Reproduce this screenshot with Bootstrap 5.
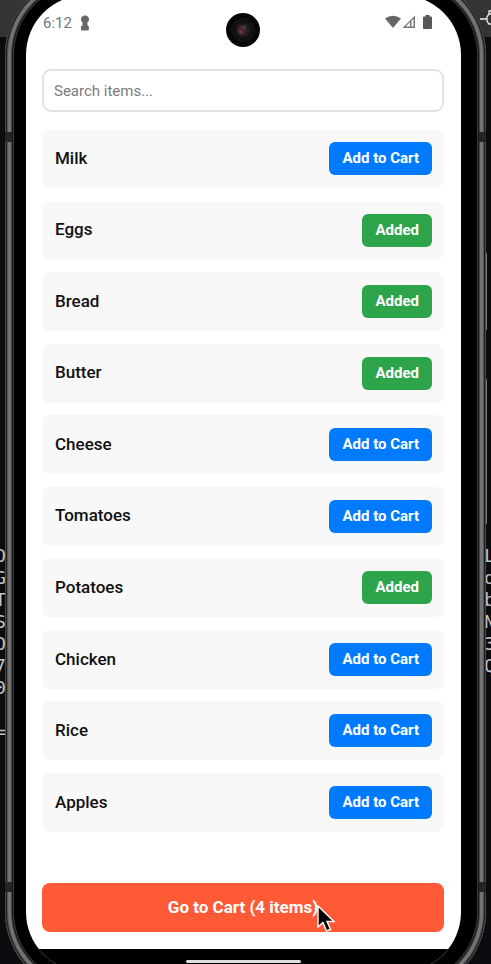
<!DOCTYPE html>
<html lang="en">
<head>
<meta charset="utf-8">
<meta name="viewport" content="width=device-width, initial-scale=1">
<title>Grocery list</title>
<link href="https://cdn.jsdelivr.net/npm/bootstrap@5.3.0/dist/css/bootstrap.min.css" rel="stylesheet">
<style>
body { background: #0c0b0f; font-family: Roboto, "Liberation Sans", sans-serif; }
.desk-strip { height: 37px; background: #343434; }
.desk-text { top: 545px; font: 18px/22px "DejaVu Sans Mono", monospace; color: #c4c4c4; white-space: pre; }
.desk-left { left: -5px; }
.desk-right { right: -4px; }
.desk-key { top: 6px; right: 0; }
.side-key { right: 4px; width: 4px; border: 1px solid #777; background: #222; border-radius: 2px; }
.key-power { top: 252px; height: 79px; }
.key-volume { top: 378px; height: 147px; }
.phone {
  margin: -25px 5px -28px; padding: 20px 25px 20px 21px; border-radius: 80px; background: #000;
  box-shadow: inset 0 0 0 1px #4a4a4a, inset 0 0 0 2px #1c1c1c, inset 0 0 0 3px #555, inset 0 0 0 6px #737373, inset 0 0 0 7px #444, inset 0 0 0 8px #161616, inset 0 0 0 9px #3a3a3a;
}
.antenna { height: 10px; width: 7px; background: #252525; }
.antenna-top { top: 132px; }
.antenna-bottom { top: 882px; }
.antenna-l { left: 5px; }
.antenna-r { right: 5px; }
.phone-screen { background: #fff; border-radius: 60px; }
.status-bar { height: 74px; padding: 19px 28px 0 17px; font-size: 15px; line-height: 18px; color: #77777a; }
.camera { top: 13px; left: 50%; transform: translateX(-50%); margin-left: -3px; }
.page-pad { padding: 0 17px 17px 16px; }
.search-box { height: 43px; border: 2px solid #e2e2e2; border-radius: 9px; padding: 0 10px; font-size: 15px; margin-bottom: 17px; }
.search-box::placeholder { color: #7c7c7c; }
.items { margin-bottom: 51px; }
.item { height: 59px; padding: 0 12px 0 13px; border-radius: 8px; background: #f8f8f8; font-size: 17px; font-weight: 500; color: #111; }
.item-btn { height: 33px; padding: 0 13px; border: 0; border-radius: 6px; font-size: 15px; line-height: 33px; font-weight: 700; color: #fff; }
.item-btn, .item-btn:hover { background: #007bff; color: #fff; }
.item-btn.is-added { background: #2ea44a; }
.cart-btn, .cart-btn:hover { height: 49px; border: 0; border-radius: 8px; background: #ff5a36; color: #fff; font-size: 17px; font-weight: 700; }
.nav-strip { height: 23px; background: #000; }
.home-pill { bottom: 1px; left: 50%; width: 115px; height: 3px; margin-left: -60px; background: #ddd; border-radius: 2px; }
.pointer { left: 275px; top: 22px; }
</style>
<script src="https://cdn.jsdelivr.net/npm/bootstrap@5.3.0/dist/js/bootstrap.bundle.min.js"></script>
</head>
<body>
<div class="position-relative min-vh-100 d-flex overflow-hidden">
  <div class="desk-strip position-absolute top-0 start-0 w-100"></div>
  <svg class="desk-key position-absolute" width="12" height="22" viewBox="0 0 12 22" fill="none" stroke="#eee" stroke-width="1.3" aria-hidden="true"><path d="M1 13H8M12 8H10L8 11V15L10 18H12M10 8V5H12"/></svg>
  <div class="desk-text desk-left position-absolute" aria-hidden="true">O
G
T
S
O
7
0

=</div>
  <div class="desk-text desk-right position-absolute" aria-hidden="true">L
d
b
N
3
Q</div>
  <div class="side-key key-power position-absolute"></div>
  <div class="side-key key-volume position-absolute"></div>

  <main class="phone position-relative flex-grow-1 d-flex">
    <div class="phone-screen flex-grow-1 d-flex flex-column overflow-hidden">
      <header class="status-bar d-flex align-items-start justify-content-between">
        <div class="d-flex align-items-center gap-2">
          <span>6:12</span>
          <svg width="10" height="16" viewBox="0 0 10 16" fill="#68686a" aria-hidden="true"><path d="M5 0.500C7.600 .5 9 2.300 9 4.300C9 5.900 8.300 6.900 7.300 7.500L7.800 11H8.800V15.500H1V11H2.200L2.700 7.500C1.700 6.900 1 5.900 1 4.300C1 2.300 2.400 .5 5 .5z"/></svg>
        </div>
        <svg width="48" height="16" viewBox="0 0 48 16" aria-hidden="true">
          <path d="M0 4.500Q8 -1 16 4.500L8 14z" fill="#666668"/>
          <path d="M30 1.500V14H17.500z" fill="#777779"/><path d="M25 8V12.500H20.800zM28.500 5V12.500H26.500V6.800z" fill="#fff"/>
          <path d="M38 3.500q0-1 1-1h1.500V1h4v1.500H46q1 0 1 1V14q0 1-1 1h-7q-1 0-1-1z" fill="#59595b"/>
        </svg>
      </header>

      <div class="page-pad flex-grow-1 d-flex flex-column">
        <input class="search-box form-control" type="search" placeholder="Search items..." aria-label="Search items">
        <ul class="items list-unstyled flex-grow-1 d-flex flex-column justify-content-between">
          <li class="item d-flex align-items-center justify-content-between"><span>Milk</span><button type="button" class="btn item-btn">Add to Cart</button></li>
          <li class="item d-flex align-items-center justify-content-between"><span>Eggs</span><button type="button" class="btn item-btn is-added">Added</button></li>
          <li class="item d-flex align-items-center justify-content-between"><span>Bread</span><button type="button" class="btn item-btn is-added">Added</button></li>
          <li class="item d-flex align-items-center justify-content-between"><span>Butter</span><button type="button" class="btn item-btn is-added">Added</button></li>
          <li class="item d-flex align-items-center justify-content-between"><span>Cheese</span><button type="button" class="btn item-btn">Add to Cart</button></li>
          <li class="item d-flex align-items-center justify-content-between"><span>Tomatoes</span><button type="button" class="btn item-btn">Add to Cart</button></li>
          <li class="item d-flex align-items-center justify-content-between"><span>Potatoes</span><button type="button" class="btn item-btn is-added">Added</button></li>
          <li class="item d-flex align-items-center justify-content-between"><span>Chicken</span><button type="button" class="btn item-btn">Add to Cart</button></li>
          <li class="item d-flex align-items-center justify-content-between"><span>Rice</span><button type="button" class="btn item-btn">Add to Cart</button></li>
          <li class="item d-flex align-items-center justify-content-between"><span>Apples</span><button type="button" class="btn item-btn">Add to Cart</button></li>
        </ul>
        <div class="position-relative">
          <button type="button" class="btn cart-btn w-100 d-block">Go to Cart (4 items)</button>
          <svg class="pointer position-absolute" width="20" height="29" viewBox="0 0 20 29" aria-hidden="true"><path d="M1 1V22L6 17.500L9.500 26L13.500 24.300L10 16.500H17z" fill="#000" stroke="#fff" stroke-width="1.400"/></svg>
        </div>
      </div>
      <div class="nav-strip"></div>
    </div>
  </main>

  <svg class="camera position-absolute" width="34" height="34" viewBox="0 0 34 34" aria-hidden="true">
    <circle cx="17" cy="17" r="17" fill="#050505"/><circle cx="17" cy="17" r="12" fill="#111113"/>
    <circle cx="17" cy="17" r="7" fill="#221c20"/><circle cx="16" cy="17" r="4.500" fill="#48242f"/>
    <circle cx="15" cy="19" r="2" fill="#6b3340"/><circle cx="18" cy="14" r="1.500" fill="#3b4650"/>
  </svg>
  <div class="antenna antenna-top antenna-l position-absolute"></div>
  <div class="antenna antenna-top antenna-r position-absolute"></div>
  <div class="antenna antenna-bottom antenna-l position-absolute"></div>
  <div class="antenna antenna-bottom antenna-r position-absolute"></div>
  <div class="home-pill position-absolute"></div>
</div>
</body>
</html>
